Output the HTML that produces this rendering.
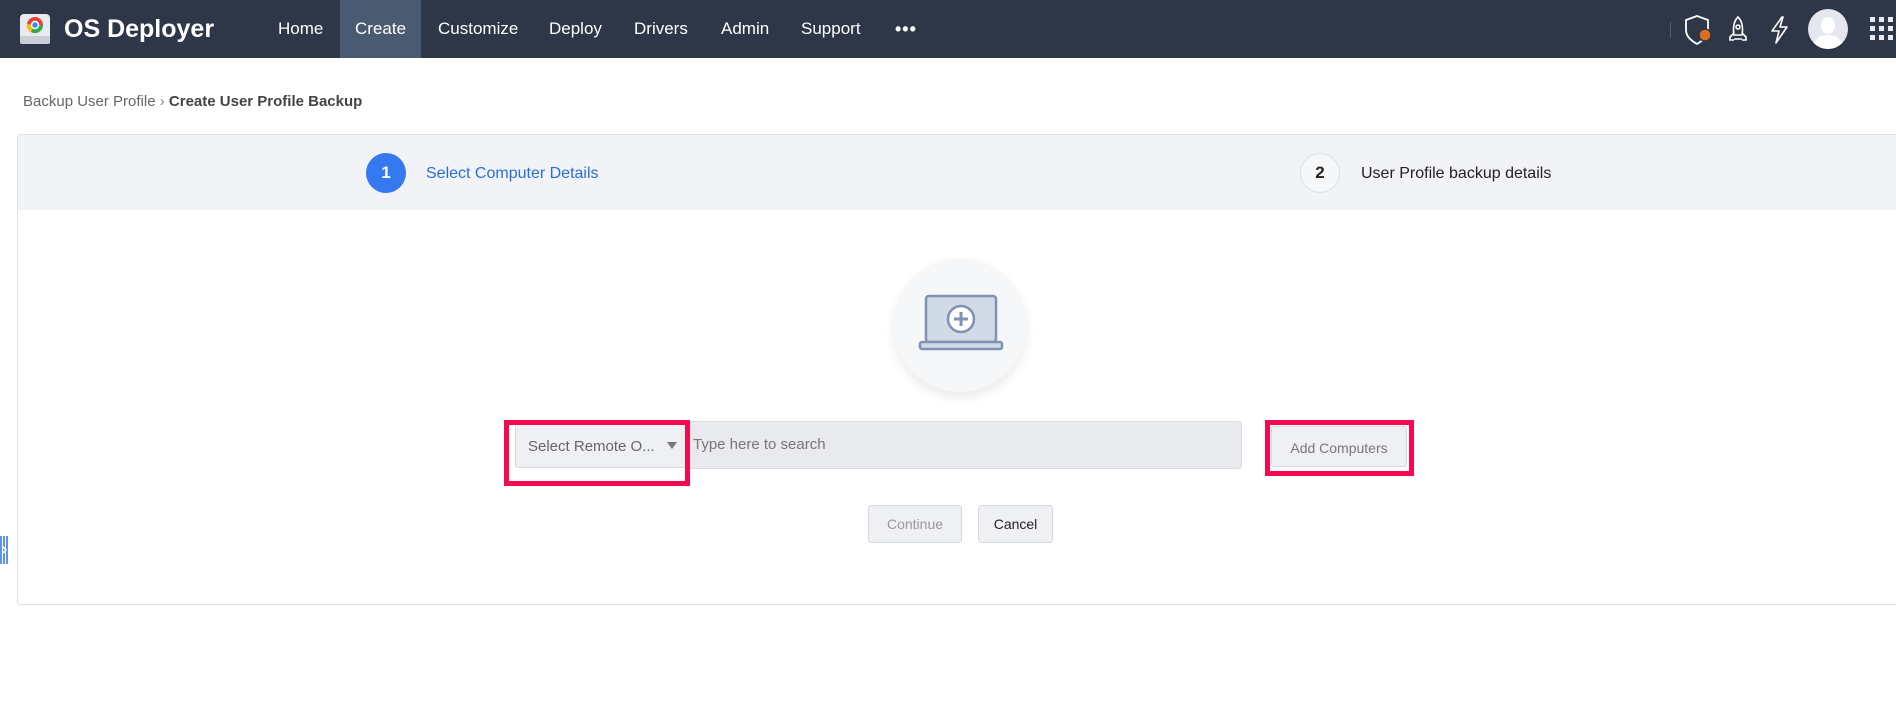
<!DOCTYPE html>
<html><head><meta charset="utf-8"><style>
*{box-sizing:border-box;margin:0;padding:0}
body{width:1896px;height:720px;overflow:hidden;background:#fff;font-family:"Liberation Sans",sans-serif;position:relative}
.nav{position:absolute;left:0;top:0;width:1896px;height:58px;background:#2d3748}
.nav .t{position:absolute;top:0;height:58px;line-height:58px;color:#fff;font-size:17px}
.abs{position:absolute}
.btn{position:absolute;background:#eef0f3;border:1px solid #d5d8dd;border-radius:3px;font-size:14px;display:flex;align-items:center;justify-content:center}
.red{position:absolute;border:5px solid #f5094f}
</style></head><body>
<div class="nav">
  <svg class="abs" style="left:18px;top:12px" width="34" height="34" viewBox="0 0 34 34">
    <rect x="2" y="2" width="30" height="30" rx="4" fill="#e8eaee"/>
    <rect x="2" y="24" width="30" height="8" rx="2" fill="#c9cdd4"/>
    <circle cx="17" cy="13" r="8" fill="#e94235"/>
    <path d="M17 13 L25 13 A8 8 0 0 1 13 20 Z" fill="#34a853"/>
    <path d="M17 13 L13 20 A8 8 0 0 1 9 12 Z" fill="#fbbc05"/>
    <circle cx="17" cy="13" r="3.5" fill="#4285f4" stroke="#fff" stroke-width="1.5"/>
  </svg>
  <div class="t" style="left:64px;font-size:25px;font-weight:bold">OS Deployer</div>
  <div class="abs" style="left:340px;top:0;width:81px;height:58px;background:#4a5a70"></div>
  <div class="t" style="left:278px">Home</div>
  <div class="t" style="left:355px">Create</div>
  <div class="t" style="left:438px">Customize</div>
  <div class="t" style="left:549px">Deploy</div>
  <div class="t" style="left:634px">Drivers</div>
  <div class="t" style="left:721px">Admin</div>
  <div class="t" style="left:801px">Support</div>
  <div class="t" style="left:895px;font-size:18px;font-weight:bold;letter-spacing:1px">•••</div>
  <div class="abs" style="left:1670px;top:22px;width:1px;height:16px;background:#4a6080"></div>
  <svg class="abs" style="left:1684px;top:14px" width="32" height="32" viewBox="0 0 32 32">
    <path d="M13 2 L24 6 V16 C24 23 18 27 13 30 C8 27 2 23 2 16 V6 Z" fill="none" stroke="#fff" stroke-width="1.8"/>
    <circle cx="21" cy="21" r="6" fill="#e07020" stroke="#2d3748" stroke-width="1.5"/>
  </svg>
  <svg class="abs" style="left:1727px;top:15px" width="22" height="30" viewBox="0 0 22 30">
    <path d="M11 2 C16 7 16 14 15 20 H7 C6 14 6 7 11 2 Z M7 18 L3 22 V25 H7 M15 18 L19 22 V25 H15 M7 24 H15" fill="none" stroke="#fff" stroke-width="1.6"/>
    <circle cx="11" cy="12" r="2" fill="none" stroke="#fff" stroke-width="1.5"/>
  </svg>
  <svg class="abs" style="left:1768px;top:15px" width="22" height="30" viewBox="0 0 22 30">
    <path d="M14 2 L4 16 H11 L8 28 L19 12 H12 L15 2 Z" fill="none" stroke="#fff" stroke-width="1.6" stroke-linejoin="round"/>
  </svg>
  <div class="abs" style="left:1808px;top:9px;width:40px;height:40px;border-radius:50%;background:#e4e7ed;overflow:hidden">
    <div class="abs" style="left:13px;top:8px;width:14px;height:17px;border-radius:50%;background:#fff"></div>
    <div class="abs" style="left:6px;top:26px;width:28px;height:20px;border-radius:50%;background:#fff"></div>
  </div>
  <svg class="abs" style="left:1870px;top:17px" width="26" height="26" viewBox="0 0 26 26" fill="#e8eaee">
    <rect x="0" y="0" width="5" height="5"/><rect x="9" y="0" width="5" height="5"/><rect x="18" y="0" width="5" height="5"/>
    <rect x="0" y="9" width="5" height="5"/><rect x="9" y="9" width="5" height="5"/><rect x="18" y="9" width="5" height="5"/>
    <rect x="0" y="18" width="5" height="5"/><rect x="9" y="18" width="5" height="5"/><rect x="18" y="18" width="5" height="5"/>
  </svg>
</div>
<div class="abs" style="left:23px;top:93px;font-size:15px;color:#666">Backup User Profile <span style="color:#888">›</span> <b style="color:#444">Create User Profile Backup</b></div>
<div class="abs" style="left:17px;top:134px;width:1890px;height:471px;border:1px solid #dcdfe4;border-radius:3px"></div>
<div class="abs" style="left:18px;top:135px;width:1878px;height:75px;background:#f2f3f7"></div>
<div class="abs" style="left:366px;top:153px;width:40px;height:40px;border-radius:50%;background:#3479ef;color:#fff;font-weight:bold;font-size:17px;line-height:40px;text-align:center">1</div>
<div class="abs" style="left:426px;top:165px;font-size:16px;color:#2a6de0">Select Computer Details</div>
<div class="abs" style="left:1300px;top:153px;width:40px;height:40px;border-radius:50%;background:#f6f7f9;border:1px solid #dde0e5;color:#222;font-weight:bold;font-size:17px;line-height:38px;text-align:center">2</div>
<div class="abs" style="left:1361px;top:165px;font-size:16px;color:#222">User Profile backup details</div>
<div class="abs" style="left:893px;top:258px;width:134px;height:134px;border-radius:50%;background:#f6f7f9;box-shadow:0 6px 10px rgba(0,0,0,0.08)"></div>
<svg class="abs" style="left:918px;top:294px" width="86" height="62" viewBox="0 0 86 62">
  <rect x="8" y="2" width="70" height="46" rx="3" fill="#d2dae6" stroke="#7e93b3" stroke-width="2.5"/>
  <rect x="2" y="48" width="82" height="7" rx="2" fill="#d2dae6" stroke="#7e93b3" stroke-width="2.5"/>
  <circle cx="43" cy="25" r="13" fill="#fff" stroke="#7e93b3" stroke-width="2.5"/>
  <path d="M43 18 V32 M36 25 H50" stroke="#7e93b3" stroke-width="3"/>
</svg>
<div class="abs" style="left:689px;top:421px;width:553px;height:48px;background:#e9eaee;border:1px solid #d8dbe0;border-radius:3px"></div>
<div class="abs" style="left:515px;top:424px;width:172px;height:44px;background:#eef0f3;border:1px solid #d5d8dd;border-radius:3px"></div>
<div class="abs" style="left:528px;top:438px;font-size:15px;color:#666">Select Remote O...</div>
<div class="abs" style="left:667px;top:442px;width:0;height:0;border-left:5px solid transparent;border-right:5px solid transparent;border-top:7px solid #777"></div>
<div class="abs" style="left:693px;top:436px;font-size:15px;color:#777">Type here to search</div>
<div class="red" style="left:504px;top:420px;width:186px;height:66px"></div>
<div class="btn" style="left:1271px;top:426px;width:136px;height:41px;color:#777;padding-top:3px">Add Computers</div>
<div class="red" style="left:1265px;top:420px;width:149px;height:56px"></div>
<div class="btn" style="left:868px;top:505px;width:94px;height:38px;color:#999">Continue</div>
<div class="btn" style="left:978px;top:505px;width:75px;height:38px;color:#222">Cancel</div>
<svg class="abs" style="left:0;top:536px" width="8" height="28" viewBox="0 0 8 28"><path d="M1 0V28M4 0V28M7 0V28" stroke="#2a6de0" stroke-width="1.5"/><path d="M2 10 L6 14 L2 18" fill="none" stroke="#fff" stroke-width="1.5"/></svg>
</body></html>
